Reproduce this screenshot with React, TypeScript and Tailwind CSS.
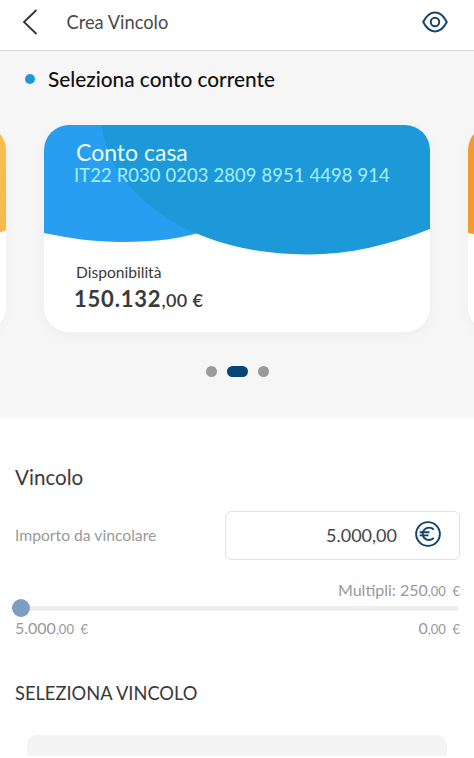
import React from "react";

function SideCard({ from, to, wave }: { from: string; to: string; wave: string }) {
  return (
    <div className="h-[207px] w-[386px] shrink-0 overflow-hidden rounded-[25px] bg-white shadow-[0_4px_14px_rgba(0,0,0,0.03)]">
      <svg width="386" height="130" viewBox="0 0 386 130">
        <defs>
          <linearGradient id={wave} x1="0" y1="0" x2="0" y2="1">
            <stop offset="0" stopColor={from} />
            <stop offset="1" stopColor={to} />
          </linearGradient>
        </defs>
        <path
          d="M0 0H386V105.500C345 120 306 129.500 264 129.500C213 129.500 178 119 151 109C110 119 50 117 0 108Z"
          fill={`url(#${wave})`}
        />
      </svg>
    </div>
  );
}

function AccountCard() {
  return (
    <div className="grid h-[207px] w-[386px] shrink-0 overflow-hidden rounded-[25px] bg-white shadow-[0_4px_14px_rgba(0,0,0,0.04)]">
      <svg className="col-start-1 row-start-1" width="386" height="130" viewBox="0 0 386 130">
        <path d="M0 0H170V103C140 114 110 117 78 117C50 117 24 113 0 108Z" fill="#279ef0" />
        <path
          d="M58 0C60 22 69 41 83 58C101 79 125 97 151 108C178 119 213 129.500 264 129.500C306 129.500 345 120 386 104V0Z"
          fill="#1d99d9"
        />
      </svg>
      <div className="col-start-1 row-start-1 flex flex-col whitespace-nowrap pl-[30px]">
        <span className="mt-[15px] pl-[2px] text-[23px] leading-[24px] text-[#eafcff]">Conto casa</span>
        <span className="text-[18.4px] leading-[22px] tracking-[0.12px] text-[#a5efff]">IT22 R030 0203 2809 8951 4498 914</span>
        <span className="mt-[76px] pl-[2px] text-[15.6px] leading-[20px] text-[#3a3a3a]">Disponibilità</span>
        <span className="mt-[3px] text-[22px] font-bold leading-[28px] tracking-[0.8px] text-[#3a3a3a]">
          150.132<span className="text-[18px] font-semibold tracking-[0.4px]">,00 €</span>
        </span>
      </div>
    </div>
  );
}

export default function App() {
  return (
    <div className="flex h-[758px] w-[474px] flex-col overflow-hidden bg-white font-[Lato,sans-serif]">
      <header className="flex h-[51px] shrink-0 items-center border-b border-[#d6d6d6] pb-[6px] pl-[22px] pr-[26px]">
        <svg width="16" height="26" viewBox="0 0 16 26" fill="none" stroke="#333" strokeWidth="1.8">
          <path d="M14.500 1L2 13L14.500 25" />
        </svg>
        <h1 className="ml-[28.500px] text-[18.3px] leading-[22px] text-[#4a4a4a]">Crea Vincolo</h1>
        <svg className="ml-auto" width="26" height="22" viewBox="0 0 26 22" fill="none" stroke="#17466f" strokeWidth="2">
          <path d="M1.200 11C4 5.500 8 1.600 13 1.600S22 5.500 24.800 11C22 16.500 18 20.400 13 20.400S4 16.500 1.200 11Z" strokeLinejoin="round" />
          <circle cx="13" cy="11" r="4.200" />
        </svg>
      </header>

      <section className="flex h-[367px] shrink-0 flex-col bg-[#f7f6f7]">
        <div className="flex h-[56px] items-center pl-[25px]">
          <span className="size-[10px] rounded-full bg-[#1d99d9]" />
          <h2 className="ml-[13px] text-[20.8px] font-medium leading-[26px] text-[#111]">Seleziona conto corrente</h2>
        </div>
        <div className="mt-[18px] flex w-[474px] justify-center gap-[38px]">
          <SideCard from="#f9bd50" to="#f4b84c" wave="wave-left" />
          <AccountCard />
          <SideCard from="#f39a2c" to="#f39a2c" wave="wave-right" />
        </div>
        <div className="mt-[34px] flex items-center justify-center gap-[10px]">
          <span className="size-[11px] rounded-full bg-[#9b9a9b]" />
          <span className="h-[11px] w-[21px] rounded-full bg-[#04457a]" />
          <span className="size-[11px] rounded-full bg-[#9b9a9b]" />
        </div>
      </section>

      <main className="flex flex-col pl-[15px] pr-[14px]">
        <h3 className="mt-[46px] text-[20.6px] leading-[26px] text-[#3a3a3a]">Vincolo</h3>
        <div className="mt-[20px] flex h-[50px] items-center justify-between">
          <span className="pt-[2px] text-[15.7px] text-[#999]">Importo da vincolare</span>
          <div className="flex h-[49px] w-[235px] items-center justify-end rounded-[6px] border border-[#e0e0e0] pr-[18px]">
            <span className="text-[18px] text-[#444]">5.000,00</span>
            <svg className="mb-[2px] ml-[18px]" width="26" height="26" viewBox="0 0 27 27" fill="none" stroke="#0f426f" strokeWidth="2">
              <circle cx="13.500" cy="13.500" r="12.300" />
              <path d="M19.500 9C18.300 7.600 16.600 6.900 14.700 6.900C10.900 6.900 8 9.700 8 13.300S10.900 19.700 14.700 19.700C16.600 19.700 18.300 19 19.500 17.600M4.800 11.700H15M4.800 14.900H14" />
            </svg>
          </div>
        </div>
        <div className="mt-[20px] whitespace-pre text-right text-[16px] leading-[20px] text-[#999]">
          Multipli: 250<span className="text-[13px]">,00  €</span>
        </div>
        <div className="-ml-[3px] -mt-[2px] flex h-[18px] items-center pr-[2px]">
          <span className="size-[18px] rounded-full bg-[#7c9fc1]" />
          <span className="h-[5px] flex-1 bg-[#eee]" />
        </div>
        <div className="mt-px flex justify-between whitespace-pre text-[16px] leading-[20px] text-[#999]">
          <span>5.000<span className="text-[13px]">,00  €</span></span>
          <span>0<span className="text-[13px]">,00  €</span></span>
        </div>
        <h3 className="mt-[42px] text-[18.3px] leading-[24px] text-[#3a3a3a]">SELEZIONA VINCOLO</h3>
        <div className="ml-[12px] mt-[30px] h-[21px] w-[420px] rounded-t-[10px] bg-[#f4f4f4]" />
      </main>
    </div>
  );
}
